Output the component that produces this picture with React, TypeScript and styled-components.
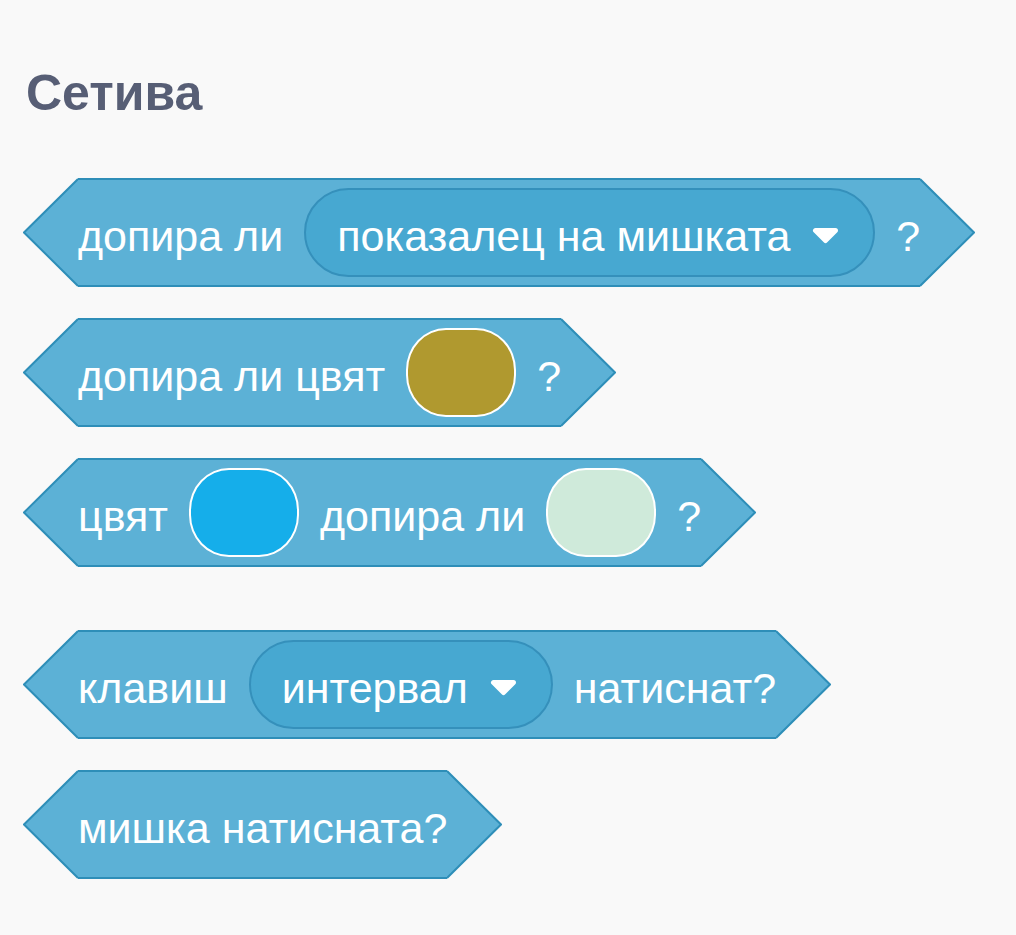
import * as React from "react";
import styled, { createGlobalStyle } from "styled-components";

const GlobalStyle = createGlobalStyle`
  html, body {
    margin: 0;
    padding: 0;
    background: #f9f9f9;
  }
  body {
    font-family: "Liberation Sans", Arial, sans-serif;
  }
`;

const Page = styled.div`
  padding: 68px 0 40px 23px;
`;

const Title = styled.h2`
  margin: 0 0 60px 3px;
  font-size: 50px;
  line-height: 1;
  font-weight: 700;
  color: #575e75;
`;

const Palette = styled.div`
  display: flex;
  flex-direction: column;
  align-items: flex-start;
  gap: 31px;
`;

const Block = styled.div<{ $spaced?: boolean }>`
  display: flex;
  height: 109px;
  ${({ $spaced }) => ($spaced ? "margin-top: 32px;" : "")}
`;

const BlockBody = styled.div`
  display: flex;
  align-items: center;
  gap: 21px;
  box-sizing: border-box;
  height: 109px;
  background: #5cb1d6;
  border-top: 2px solid #2e8eb8;
  border-bottom: 2px solid #2e8eb8;
  color: #fff;
  font-size: 43px;
  white-space: nowrap;
`;

// text sits a little below the block's middle, like scratch-blocks does it
const Label = styled.span`
  line-height: 1;
  padding-top: 8px;
`;

const Dropdown = styled.div`
  display: flex;
  align-items: center;
  gap: 22px;
  box-sizing: border-box;
  height: 89px;
  padding: 0 34px 0 31px;
  border-radius: 45px;
  background: #47a8d1;
  border: 2px solid #3590bb;
`;

const ArrowIcon = styled.svg`
  display: block;
  margin-top: 6px;
`;

const Swatch = styled.div<{ $color: string }>`
  box-sizing: border-box;
  width: 110px;
  height: 89px;
  border-radius: 40px / 42px;
  border: 2px solid #fff;
  background: ${({ $color }) => $color};
`;

const Cap = ({ side }: { side: "left" | "right" }) => {
  const d =
    side === "left" ? "M55,1 L1,54.5 L55,108" : "M0,1 L54,54.5 L0,108";
  return (
    <svg width="55" height="109" viewBox="0 0 55 109" style={{ display: "block" }}>
      <path d={d + " Z"} fill="#5cb1d6" />
      <path d={d} fill="none" stroke="#2e8eb8" strokeWidth="2" strokeLinejoin="miter" />
    </svg>
  );
};

const Arrow = () => (
  <ArrowIcon width="27" height="17" viewBox="0 0 27 17">
    <path
      d="M3.5,3.5 L23.5,3.5 L13.5,13.5 Z"
      fill="#fff"
      stroke="#fff"
      strokeWidth="5"
      strokeLinejoin="round"
    />
  </ArrowIcon>
);

const Boolean = ({
  children,
  spaced,
}: {
  children: React.ReactNode;
  spaced?: boolean;
}) => (
  <Block $spaced={spaced}>
    <Cap side="left" />
    <BlockBody>{children}</BlockBody>
    <Cap side="right" />
  </Block>
);

const Menu = ({ value }: { value: string }) => (
  <Dropdown>
    <Label>{value}</Label>
    <Arrow />
  </Dropdown>
);

const App = () => {
  return (
    <Page>
      <GlobalStyle />
      <Title>Сетива</Title>
      <Palette>
        <Boolean>
          <Label>допира ли</Label>
          <Menu value="показалец на мишката" />
          <Label>?</Label>
        </Boolean>
        <Boolean>
          <Label>допира ли цвят</Label>
          <Swatch $color="#b0992f" />
          <Label>?</Label>
        </Boolean>
        <Boolean>
          <Label>цвят</Label>
          <Swatch $color="#15aeea" />
          <Label>допира ли</Label>
          <Swatch $color="#cfeada" />
          <Label>?</Label>
        </Boolean>
        <Boolean spaced>
          <Label>клавиш</Label>
          <Menu value="интервал" />
          <Label>натиснат?</Label>
        </Boolean>
        <Boolean>
          <Label>мишка натисната?</Label>
        </Boolean>
      </Palette>
    </Page>
  );
};

export default App;
